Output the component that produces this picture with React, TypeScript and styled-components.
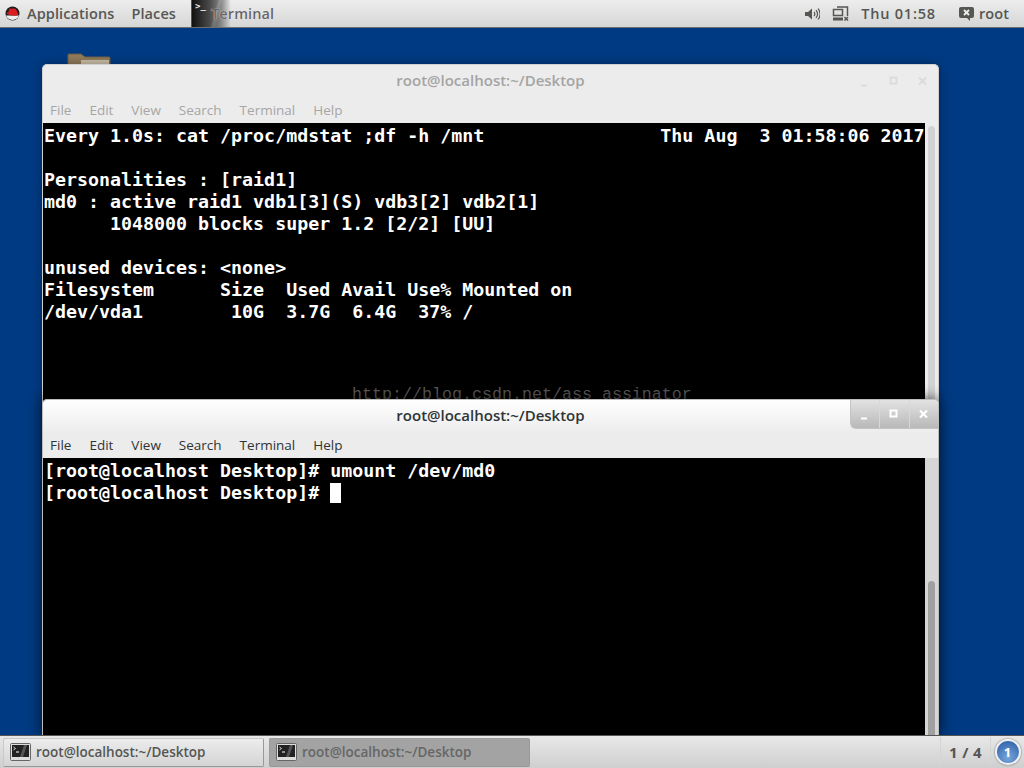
import React from "react";
import styled, { createGlobalStyle } from "styled-components";

const Global = createGlobalStyle`
  html, body { margin: 0; padding: 0; height: 100%; overflow: hidden; background: #003a82; }
  #root { height: 100%; }
  * { box-sizing: border-box; }
`;
const uiFont = `"Open Sans", "Noto Sans", "Liberation Sans", sans-serif`;

const Screen = styled.div`
  width: 1024px; height: 768px; display: flex; flex-direction: column;
  font-family: ${uiFont}; overflow: hidden;
`;
const TopPanel = styled.header`
  height: 28px; flex: none; display: flex; align-items: center;
  background: linear-gradient(#ededed, #d6d6d6);
  border-bottom: 1px solid #6e6e6e; color: #555753; font-size: 14.5px; font-weight: 600;
  position: relative; z-index: 3;
`;
const LogoSlot = styled.span`display: flex; margin-left: 5px; width: 22px;`;
const PanelItem = styled.span<{ $gap?: number; $spacing?: number }>`
  margin-left: ${p => p.$gap ?? 0}px; white-space: nowrap; letter-spacing: ${p => p.$spacing ?? 0.1}px;
`;
const AppTile = styled.div`
  width: 40px; height: 27px; margin-left: 15px; border-left: 1px solid #555; flex: none; display: flex;
  background:
    linear-gradient(105deg, transparent 55%, rgba(255,255,255,.16) 60%, transparent 68%),
    linear-gradient(90deg, #111 0, #4a4a4a 45%, #888 75%, rgba(200,200,200,0) 100%);
  color: #eee; font: bold 9px "DejaVu Sans Mono", monospace; padding: 1px 0 0 3px;
`;
const TerminalLabel = styled(PanelItem)`margin-left: -20px; color: #666; text-shadow: 0 0 1px #fff;`;
const PanelRight = styled.div`margin-left: auto; display: flex; align-items: center; padding-right: 15px;`;
const IconSlot = styled.span<{ $left?: number }>`display: flex; margin-left: ${p => p.$left ?? 0}px;`;

const Desktop = styled.main`
  flex: 1; position: relative; background: #003a82;
`;
const FolderSlot = styled.div`position: absolute; left: 67px; top: 25px; display: flex;`;
const Window = styled.section<{ $top: number; $height: number; $focused?: boolean }>`
  position: absolute; left: 42px; top: ${p => p.$top}px; width: 897px; height: ${p => p.$height}px;
  border-radius: 5px 5px 0 0; display: flex; flex-direction: column;
  background: #ececec; border: 1px solid ${p => (p.$focused ? "#bdbdbd" : "#d0d0d0")};
  border-bottom: 0;
  box-shadow: 0 0 ${p => (p.$focused ? "14px rgba(0,0,0,.75)" : "8px rgba(0,0,0,.35)")};
`;
const TitleBar = styled.div<{ $focused?: boolean }>`
  height: 33px; flex: none; position: relative; display: flex; align-items: center; justify-content: center;
  font-size: 15px; font-weight: 600; padding: 0 0 3px 0;
  color: ${p => (p.$focused ? "#2e3436" : "#a4a4a4")};
  background: ${p => (p.$focused ? "linear-gradient(#fff, #ececec)" : "#ececec")};
  border-radius: 5px 5px 0 0;
`;
const FadedControls = styled.div`
  position: absolute; right: 0; top: 1px; height: 30px; width: 88px; display: flex; align-items: center;
`;
const Controls = styled.div`
  position: absolute; right: 0; top: 0; height: 29px; width: 88px; display: flex;
  background: linear-gradient(#e2e2e2, #b8b8b8);
  border: 1px solid #c4c4c4; border-top: 0; border-right: 0; border-radius: 0 4px 0 6px;
`;
const ControlCell = styled.span<{ $divider?: boolean }>`
  flex: 1; display: flex; align-items: center; justify-content: center;
  border-left: ${p => (p.$divider ? "1px solid #d8d8d8" : "0")};
`;
const FadedCell = styled.span`flex: 1; display: flex; align-items: center; justify-content: center;`;
const MenuBar = styled.nav<{ $focused?: boolean }>`
  height: 25px; flex: none; display: flex; gap: 18px; padding: 0 0 1px 7px; align-items: center;
  font-size: 13.5px; color: ${p => (p.$focused ? "#2e3436" : "#a6a6a6")};
`;
const Body = styled.div`flex: 1; display: flex; min-height: 0;`;
const Term = styled.pre`
  margin: 0; flex: 1; background: #000; color: #fff; overflow: hidden; padding: 2px 0 0 1px; position: relative;
  font: bold 18.3px/22px "DejaVu Sans Mono", monospace;
  letter-spacing: 0;
`;
const Cursor = styled.span`display: inline-block; width: 11px; height: 20px; background: #fff; vertical-align: -4px;`;
const Track = styled.div<{ $focused?: boolean }>`
  width: 13px; flex: none; position: relative; background: ${p => (p.$focused ? "#d6d6d6" : "#ececec")};
`;
const Thumb = styled.div<{ $focused?: boolean; $top: number }>`
  position: absolute; left: 3px; right: 3px; top: ${p => p.$top}px; bottom: 0; border-radius: 4px 4px 0 0;
  background: ${p => (p.$focused ? "#a0a0a0" : "#d2d2d2")};
`;
const Watermark = styled.span`
  position: absolute; left: 309px; top: 262px; font: 16.67px/20px "Liberation Mono", monospace; color: #5a5a5a;
`;

const Taskbar = styled.footer`
  height: 33px; flex: none; display: flex; align-items: stretch; position: relative; z-index: 3;
  background: linear-gradient(#e8e8e8, #cfcfcf); border-top: 1px solid #555; padding: 2px 0 0 3px;
`;
const TaskButton = styled.div<{ $active?: boolean }>`
  width: 261px; margin: 0 5px 1px 0; display: flex; align-items: center; gap: 5px; padding: 0 0 2px 6px;
  font-size: 13.5px; font-weight: 600;
  color: ${p => (p.$active ? "#666" : "#555753")};
  background: ${p => (p.$active ? "#a3a3a3" : "linear-gradient(#ececec, #d4d4d4)")};
  border: 1px solid ${p => (p.$active ? "#9a9a9a" : "#c8c8c8")};
  border-bottom-color: #999; border-right-color: #999; border-radius: 2px;
`;
const Pager = styled.div`
  margin-left: auto; width: 51px; display: flex; align-items: center; justify-content: center;
  border: 1px solid #d4d4d4; border-width: 0 1px; margin-top: -1px; font-size: 15px; font-weight: 700; color: #555;
  letter-spacing: .4px; padding-bottom: 2px;
`;
const WorkspaceSlot = styled.div`width: 33px; display: flex; align-items: center; justify-content: center; margin-top: -2px;`;
const WorkspaceNo = styled.span`
  width: 26px; height: 26px; border-radius: 50%; border: 2px solid #f0f0f0; display: flex; align-items: center; justify-content: center;
  background: radial-gradient(circle at 50% 75%, #78a6dc, #3a6cb0 75%); color: #fff; font-size: 13px; font-weight: 700;
  box-shadow: 0 0 2px rgba(0,0,0,.6);
`;

const RedHat = () => (
  <svg width="15" height="15" viewBox="0 0 15 15">
    <circle cx="7.5" cy="7.5" r="7" fill="#1c1c1c" />
    <path d="M1 9.5 A7 7 0 0 0 14 9.5 Z" fill="#eee" />
    <path d="M1.5 7 C3 9.5 10 10.5 13 9 C14 8 12.5 7 12 5.5 C11.5 3 10 2 8.5 2.5 C7 3 5 1.8 4 3.5 L3.6 6 C2.8 6 2 6.3 1.5 7 Z" fill="#d81e1e" />
  </svg>
);
const Speaker = () => (
  <svg width="16" height="14" viewBox="0 0 16 14" fill="none" stroke="#555753">
    <path d="M1 5h3l4-3.5v11L4 9H1z" fill="#555753" stroke="none" />
    <path d="M10 5c1 1.2 1 2.8 0 4M12 3.2c1.800 2.200 1.800 5.400 0 7.600M14 1.500c2.600 3.300 2.600 7.700 0 11" strokeWidth="1.200" />
  </svg>
);
const Network = () => (
  <svg width="17" height="15" viewBox="0 0 17 15" fill="none">
    <path d="M5 1h10.500v9" stroke="#555753" strokeWidth="1.500" />
    <rect x="1.500" y="3.500" width="9" height="6" fill="none" stroke="#555753" strokeWidth="1.500" />
    <rect x="1" y="11.500" width="10" height="3" fill="#555753" />
    <path d="M12.500 11l3.500 3.500M16 11l-3.500 3.500" stroke="#555753" strokeWidth="1.500" />
  </svg>
);
const ChatX = () => (
  <svg width="15" height="14" viewBox="0 0 15 14">
    <path d="M2 0h11a2 2 0 0 1 2 2v7a2 2 0 0 1-2 2h-2v3l-3-3H2a2 2 0 0 1-2-2V2a2 2 0 0 1 2-2z" fill="#555753" />
    <path d="M5 3l5 5M10 3l-5 5" stroke="#eee" strokeWidth="1.800" />
  </svg>
);
const Folder = () => (
  <svg width="44" height="14" viewBox="0 0 44 14">
    <path d="M1 14V2q0-1 1-1h12l4 3h24q1 0 1 1v9z" fill="#8f7a5a" stroke="#6f5d44" />
    <rect x="14" y="7" width="28" height="7" fill="#c9bda6" />
  </svg>
);
const TermIcon = () => (
  <svg width="21" height="18" viewBox="0 0 21 18">
    <rect x=".5" y=".5" width="20" height="17" rx="1" fill="#ddd" stroke="#666" />
    <rect x="2" y="2" width="17" height="12" fill="#222" />
    <path d="M10 14l4-12h3l-4 12z" fill="#555" />
    <path d="M3.500 4l2 1.500-2 1.500" stroke="#fff" fill="none" strokeWidth=".8" />
    <path d="M6 9h3" stroke="#fff" />
  </svg>
);
const Glyph = ({ kind, color }: { kind: "min" | "max" | "close"; color: string }) => (
  <svg width="10" height="11" viewBox="0 0 10 11" fill="none">
    {kind === "min" && <path d="M1 9.500h6" stroke={color} strokeWidth="2" />}
    {kind === "max" && <rect x="1.500" y="1.500" width="6" height="6" stroke={color} strokeWidth="2" />}
    {kind === "close" && <path d="M1 1.500l7 7M8 1.500l-7 7" stroke={color} strokeWidth="2.200" />}
  </svg>
);

const menus = ["File", "Edit", "View", "Search", "Terminal", "Help"];
const Menus = ({ focused }: { focused?: boolean }) => (
  <MenuBar $focused={focused}>{menus.map(m => <span key={m}>{m}</span>)}</MenuBar>
);

const watchText = `Every 1.0s: cat /proc/mdstat ;df -h /mnt                Thu Aug  3 01:58:06 2017

Personalities : [raid1]
md0 : active raid1 vdb1[3](S) vdb3[2] vdb2[1]
      1048000 blocks super 1.2 [2/2] [UU]

unused devices: <none>
Filesystem      Size  Used Avail Use% Mounted on
/dev/vda1        10G  3.7G  6.4G  37% /`;

export default function App() {
  return (
    <Screen>
      <Global />
      <TopPanel>
        <LogoSlot><RedHat /></LogoSlot>
        <PanelItem>Applications</PanelItem>
        <PanelItem $gap={17}>Places</PanelItem>
        <AppTile>&gt;_</AppTile>
        <TerminalLabel>Terminal</TerminalLabel>
        <PanelRight>
          <IconSlot><Speaker /></IconSlot>
          <IconSlot $left={12}><Network /></IconSlot>
          <PanelItem $gap={12} $spacing={0.8}>Thu 01:58</PanelItem>
          <IconSlot $left={23}><ChatX /></IconSlot>
          <PanelItem $gap={5}>root</PanelItem>
        </PanelRight>
      </TopPanel>
      <Desktop>
        <FolderSlot><Folder /></FolderSlot>
        <Window $top={36} $height={340}>
          <TitleBar>
            root@localhost:~/Desktop
            <FadedControls>
              <FadedCell><Glyph kind="min" color="#dcdcdc" /></FadedCell>
              <FadedCell><Glyph kind="max" color="#dcdcdc" /></FadedCell>
              <FadedCell><Glyph kind="close" color="#dcdcdc" /></FadedCell>
            </FadedControls>
          </TitleBar>
          <Menus />
          <Body>
            <Term>
              {watchText}
              <Watermark>http://blog.csdn.net/ass_assinator</Watermark>
            </Term>
            <Track><Thumb $top={3} /></Track>
          </Body>
        </Window>
        <Window $top={371} $height={336} $focused>
          <TitleBar $focused>
            root@localhost:~/Desktop
            <Controls>
              <ControlCell><Glyph kind="min" color="#fff" /></ControlCell>
              <ControlCell $divider><Glyph kind="max" color="#fff" /></ControlCell>
              <ControlCell $divider><Glyph kind="close" color="#fff" /></ControlCell>
            </Controls>
          </TitleBar>
          <Menus focused />
          <Body>
            <Term>{`[root@localhost Desktop]# umount /dev/md0
[root@localhost Desktop]# `}<Cursor /></Term>
            <Track $focused><Thumb $focused $top={123} /></Track>
          </Body>
        </Window>
      </Desktop>
      <Taskbar>
        <TaskButton><TermIcon />root@localhost:~/Desktop</TaskButton>
        <TaskButton $active><TermIcon />root@localhost:~/Desktop</TaskButton>
        <Pager>1 / 4</Pager>
        <WorkspaceSlot><WorkspaceNo>1</WorkspaceNo></WorkspaceSlot>
      </Taskbar>
    </Screen>
  );
}
